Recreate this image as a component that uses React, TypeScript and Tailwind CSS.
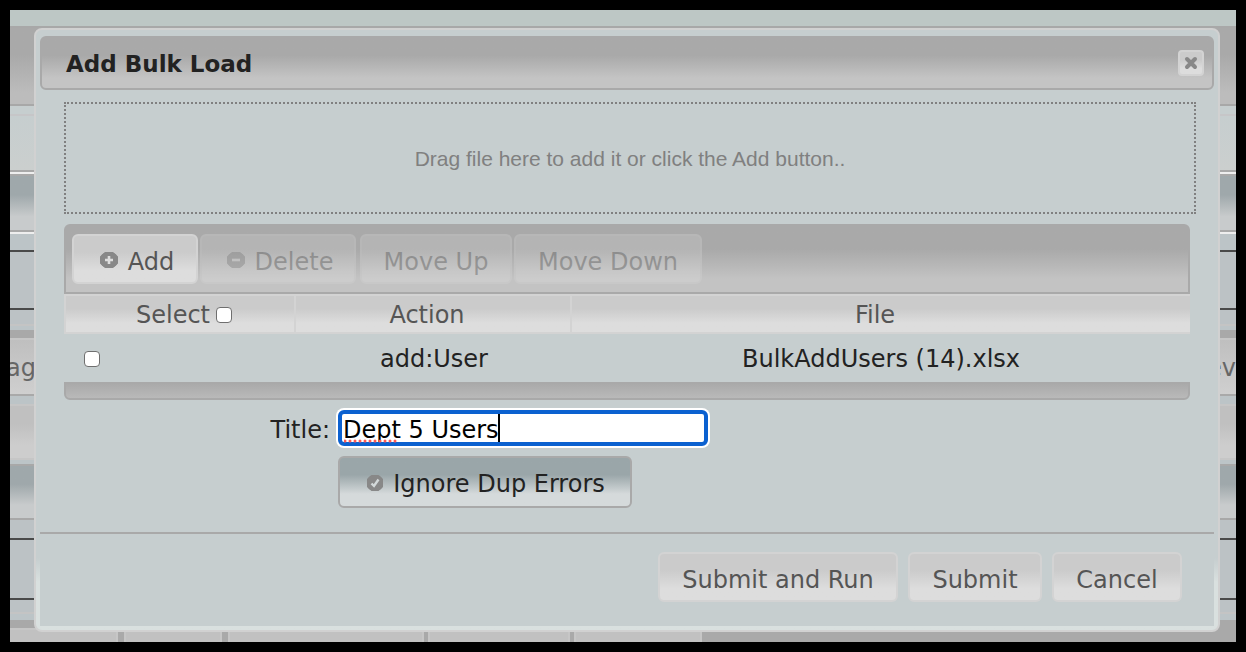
import { useState } from 'react';
import type { ButtonHTMLAttributes, ReactNode } from 'react';

const GLOSS = 'bg-linear-to-b from-[#cbcbcb] from-35% to-[#dddddd] to-75% text-[#555555]';
const FACE = `border-2 border-[#d3d3d3] ${GLOSS}`;

function PlusIcon() {
  return (
    <svg viewBox="0 0 18 16" className="mb-1 h-4 w-[18px] shrink-0" aria-hidden="true">
      <path d="M5 0h8l5 4.5v7L13 16H5l-5-4.5v-7z" fill="#888888" />
      <rect x="0.5" y="0.5" width="17" height="15" rx="6" fill="#888888" />
      <path d="M9 4v8M5 8h8" stroke="#dddddd" strokeWidth="2.6" />
    </svg>
  );
}

function MinusIcon() {
  return (
    <svg viewBox="0 0 18 16" className="mb-1 h-4 w-[18px] shrink-0" aria-hidden="true">
      <path d="M5 0h8l5 4.5v7L13 16H5l-5-4.5v-7z" fill="#888888" />
      <rect x="0.5" y="0.5" width="17" height="15" rx="6" fill="#888888" />
      <path d="M5 8h8" stroke="#dddddd" strokeWidth="2.6" />
    </svg>
  );
}

function CheckIcon() {
  return (
    <svg viewBox="0 0 16 16" className="mb-0.5 size-4 shrink-0" aria-hidden="true">
      <path d="M4.5 0h7L16 4v8l-4.5 4h-7L0 12V4z" fill="#888888" />
      <rect x="0.5" y="0.5" width="15" height="15" rx="5" fill="#888888" />
      <path d="M4.5 8.5l2.5 2.5 4.5-6.5" fill="none" stroke="#d3d9da" strokeWidth="2.4" />
    </svg>
  );
}

function CloseIcon() {
  return (
    <svg viewBox="0 0 14 14" className="size-[14px]" aria-hidden="true">
      <path d="M3 3l8 8M11 3l-8 8" stroke="#888888" strokeWidth="4" strokeLinecap="round" />
    </svg>
  );
}

function Button({
  className = '',
  children,
  ...rest
}: ButtonHTMLAttributes<HTMLButtonElement> & { children: ReactNode }) {
  return (
    <button
      type="button"
      className={`flex h-[50px] items-center justify-center gap-2.5 whitespace-nowrap rounded-md pt-1.5 disabled:opacity-35 ${FACE} ${className}`}
      {...rest}
    >
      {children}
    </button>
  );
}

function Line({ className }: { className: string }) {
  return <div className={`h-0.5 ${className}`} />;
}

// The page under the dialog: only its edges stay visible.
function Backdrop() {
  return (
    <div className="flex flex-col bg-[#bcc4c7]" aria-hidden="true">
      <div className="h-4 bg-[#bdc7c5]" />
      <div className="h-20 border-y-2 border-[#a8a8a8] bg-linear-to-b from-[#a9a9a9] from-35% to-[#bcbcbc] to-85%" />
      <div className="h-2 bg-[#c6cecf]" />
      <Line className="bg-[#c6c6c8]" />
      <div className="h-[54px] bg-linear-to-b from-[#c6cecf] to-[#cbcfce]" />
      <Line className="bg-[#a8a8a8]" />
      <Line className="bg-[#eeeeee]" />
      <div className="h-[58px] border-y-2 border-[#a8a8a8] bg-linear-to-b from-[#9fa8ab] from-35% to-[#c8cbcc] to-75%" />
      <Line className="bg-[#eeeeee]" />
      <div className="h-4" />
      <div className="h-[60px] border-y-2 border-[#4a4a4a] bg-[#bcc2c5]" />
      <div className="h-3.5 bg-[#bcc2c5]" />
      <Line className="bg-[#c4c4c4]" />
      <div className="h-1" />
      <div className="h-2 bg-[#a9a9a9]" />
      <div className="flex h-[58px] items-center justify-between border-t-2 border-b-2 border-t-[#c6c6c6] border-b-[#a9a9a9] bg-linear-to-b from-[#bfbfbf] to-[#cfcfcf] pt-0.5 text-[#666666]">
        <span className="-ml-1">age</span>
        <span>ev</span>
      </div>
      <div className="h-2" />
      <div className="h-14 border-y-2 border-[#c6c6c6] bg-linear-to-b from-[#c0c0c0] from-35% to-[#cdcdcd] to-75%" />
      <div className="h-1" />
      <div className="h-14 border-y-2 border-[#a8a8a8] bg-linear-to-b from-[#9fa8ab] from-35% to-[#c8cbcc] to-75%" />
      <div className="h-[18px] bg-[#bcc2c5]" />
      <div className="h-[62px] border-y-2 border-[#4a4a4a] bg-[#bcc2c5]" />
      <div className="h-3 bg-[#bcc2c5]" />
      <Line className="bg-[#c4c4c4]" />
      <div className="h-1.5" />
      <div className="flex h-[22px] gap-1 bg-[#a9a9a9] pt-2">
        <div className="mr-0.5 w-[108px] border-2 border-b-0 border-l-0 border-[#c6c6c6] bg-[#c1c1c1]" />
        <div className="mr-0.5 w-[98px] border-2 border-b-0 border-[#c6c6c6] bg-[#c1c1c1]" />
        <div className="w-[196px] border-2 border-b-0 border-[#c6c6c6] bg-[#c1c1c1]" />
        <div className="w-[142px] border-2 border-b-0 border-[#c6c6c6] bg-[#c1c1c1]" />
        <div className="w-[128px] border-2 border-b-0 border-[#c6c6c6] bg-[#c1c1c1]" />
      </div>
    </div>
  );
}

function FileTable() {
  const [selected, setSelected] = useState(false);

  return (
    <div>
      <div className="flex h-[70px] gap-0.5 rounded-t-md border-2 border-[#a9a9a9] bg-linear-to-b from-[#a9a9a9] from-35% to-[#c3c3c3] to-80% px-1.5 pt-2">
        <Button className="w-[126px] pl-1">
          <PlusIcon />
          Add
        </Button>
        <Button disabled className="w-[156px] pl-1">
          <MinusIcon />
          Delete
        </Button>
        <Button disabled className="ml-0.5 w-[152px]">
          Move Up
        </Button>
        <Button disabled className="w-[188px]">
          Move Down
        </Button>
      </div>
      <table className="w-full table-fixed border-separate border-spacing-0 text-center">
        <thead>
          <tr className="h-10">
            <th className={`w-[232px] p-0 pt-0.5 pl-2 font-normal ${FACE}`}>
              <label className="flex items-center justify-center gap-1.5">
                Select
                <input
                  type="checkbox"
                  checked={selected}
                  onChange={(e) => setSelected(e.target.checked)}
                  className="size-4 appearance-none rounded border border-[#6f6f6f] bg-white checked:bg-[#0b61d0]"
                />
              </label>
            </th>
            <th className={`w-[276px] border-y-2 border-r-2 border-[#d3d3d3] p-0 pt-0.5 pr-3 font-normal ${GLOSS}`}>
              Action
            </th>
            <th className={`border-y-2 border-[#d3d3d3] p-0 pt-0.5 pr-3 font-normal ${GLOSS}`}>File</th>
          </tr>
        </thead>
        <tbody>
          <tr className="h-12 text-[#222222]">
            <td className="p-0 pl-5">
              <input
                type="checkbox"
                aria-label="Select BulkAddUsers (14).xlsx"
                checked={selected}
                onChange={(e) => setSelected(e.target.checked)}
                className="mt-0.5 block size-4 appearance-none rounded border border-[#6f6f6f] bg-white checked:bg-[#0b61d0]"
              />
            </td>
            <td className="p-0 pt-0.5">add:User</td>
            <td className="p-0 pt-0.5">BulkAddUsers (14).xlsx</td>
          </tr>
        </tbody>
      </table>
      <div className="h-[18px] rounded-b-md border-2 border-[#a9a9a9] bg-linear-to-b from-[#aaaaaa] to-[#b9b9b9]" />
    </div>
  );
}

function BulkLoadDialog() {
  const [title, setTitle] = useState('Dept 5 Users');
  const [ignoreDup, setIgnoreDup] = useState(true);

  return (
    <div
      role="dialog"
      aria-labelledby="dialog-title"
      className="rounded-lg border-2 border-[#d1d1d1] bg-linear-to-b from-[#c6cecf] from-88% to-[#d9e0df] to-92% px-1 pt-1.5 pb-1 text-[#222222]"
    >
      <div className="flex h-[54px] items-center justify-between rounded-md border-2 border-[#a9a9a9] bg-linear-to-b from-[#a9a9a9] from-35% to-[#c4c4c4] to-80% pr-2 pl-6">
        <h1 id="dialog-title" className="pt-0.5 text-[23px] font-bold">
          Add Bulk Load
        </h1>
        <button
          type="button"
          aria-label="Close"
          className={`flex size-[26px] items-center justify-center rounded ${FACE}`}
        >
          <CloseIcon />
        </button>
      </div>

      <div className="bg-[#c6cecf] pt-3">
        <div className="mr-[18px] ml-6 flex h-28 items-center justify-center border-2 border-dotted border-[#808080] pt-0.5 font-['Liberation_Sans',sans-serif] text-[21px] text-[#808080]">
          Drag file here to add it or click the Add button..
        </div>

        <div className="mt-2.5 mr-6 ml-6">
          <FileTable />
          <div className="mt-2.5 flex items-center">
            <label htmlFor="load-title" className="w-[274px] pt-1 pr-2 text-right">
              Title:
            </label>
            <div className="relative">
              <input
                id="load-title"
                value={title}
                onChange={(e) => setTitle(e.target.value)}
                spellCheck={false}
                className="block h-9 w-[370px] rounded-md border-4 border-[#0b61d0] bg-white px-px pt-1 text-black ring-2 ring-white outline-none"
              />
              <svg className="pointer-events-none absolute top-[29px] left-1.5 h-1 w-[54px]" aria-hidden="true">
                <path d="M1 2h53" stroke="#ff5a55" strokeWidth="3" strokeDasharray="0 5" strokeLinecap="round" />
              </svg>
              <span className="pointer-events-none absolute top-1 left-[160px] h-7 w-0.5 bg-black" />
            </div>
          </div>
          <button
            type="button"
            aria-pressed={ignoreDup}
            onClick={() => setIgnoreDup(!ignoreDup)}
            className="mt-2.5 ml-[274px] flex h-[52px] w-[294px] items-center justify-center gap-2.5 rounded-md border-2 border-[#a9a9a9] bg-linear-to-b from-[#9aa6a9] from-35% to-[#d5dadb] to-75% pt-1 pl-0.5 whitespace-nowrap"
          >
            <CheckIcon />
            Ignore Dup Errors
          </button>
        </div>

        <div className="mt-6 flex h-[94px] justify-end gap-2.5 border-t-2 border-[#a9a9a9] pt-[18px] pr-8">
          <Button className="w-60">Submit and Run</Button>
          <Button className="w-[134px]">Submit</Button>
          <Button className="w-[130px]">Cancel</Button>
        </div>
      </div>
    </div>
  );
}

export default function App() {
  return (
    <div className="min-h-screen bg-black p-2.5 font-['DejaVu_Sans',Verdana,sans-serif] text-[24px] leading-8">
      <div className="relative overflow-hidden">
        <Backdrop />
        <div className="absolute inset-x-0 top-0 pt-[18px] pr-4 pl-6">
          <BulkLoadDialog />
        </div>
      </div>
    </div>
  );
}
